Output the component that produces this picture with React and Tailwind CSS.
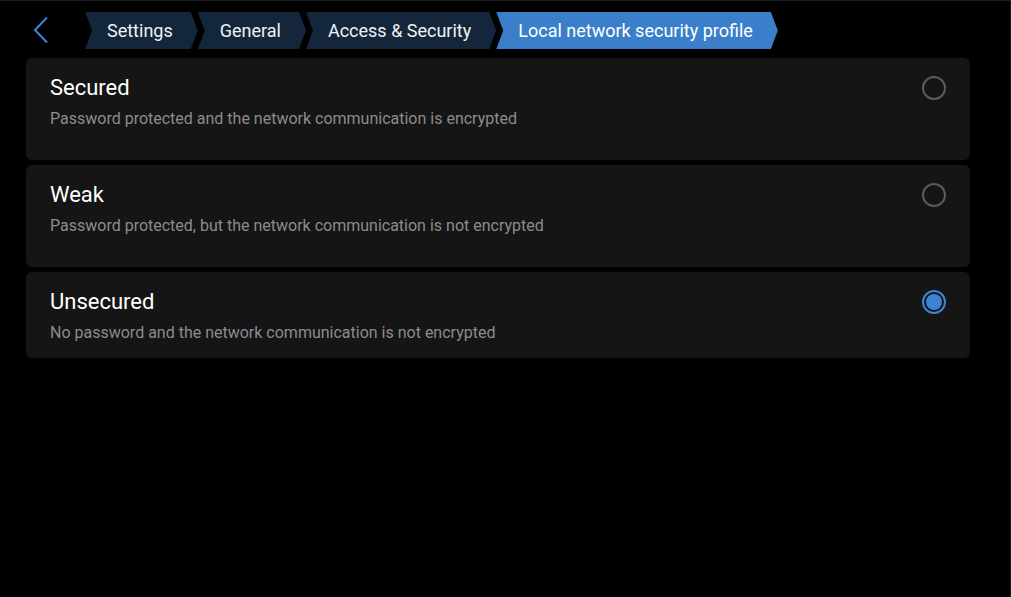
import React, { useState } from 'react';

const crumbs = [
  { label: "Settings", active: false },
  { label: "General", active: false },
  { label: "Access & Security", active: false },
  { label: "Local network security profile", active: true },
];

const profiles = [
  { id: "secured", title: "Secured", description: "Password protected and the network communication is encrypted", tall: true },
  { id: "weak", title: "Weak", description: "Password protected, but the network communication is not encrypted", tall: true },
  { id: "unsecured", title: "Unsecured", description: "No password and the network communication is not encrypted", tall: false },
];

const chevron = {
  clipPath: "polygon(0 0, calc(100% - 7px) 0, 100% 50%, calc(100% - 7px) 100%, 0 100%, 7px 50%)",
};

function Radio({ checked }) {
  if (checked) {
    return (
      <div className="w-6 h-6 rounded-full border-2 border-[#3d84d6] flex items-center justify-center">
        <div className="w-4 h-4 rounded-full bg-[#3d84d6]" />
      </div>
    );
  }
  return <div className="w-6 h-6 rounded-full border-2 border-[#5b5b5b]" />;
}

export default function App() {
  const [selected, setSelected] = useState("unsecured");

  return (
    <div
      className="w-full h-[597px] bg-black border-t border-r border-[#1d1d1d] overflow-hidden"
      style={{ fontFamily: "Roboto, 'Liberation Sans', sans-serif" }}
    >
      {/* Breadcrumb bar */}
      <div className="h-[57px] flex items-center">
        <button className="w-[85px] h-full flex items-center pl-[33px]">
          <svg width="16" height="28" viewBox="0 0 16 28" fill="none">
            <path d="M14 1.5 L2 14 L14 26.5" stroke="#3d84d6" strokeWidth="2" />
          </svg>
        </button>
        <div className="flex items-center mt-[2px]">
          {crumbs.map((c) => (
            <div
              key={c.label}
              style={chevron}
              className={`h-[37px] flex items-center pl-[22px] pr-[25px] text-[18px] leading-none whitespace-nowrap ${
                c.active ? "bg-[#3b7fca] text-white" : "bg-[#13263b] text-[#f2f2f2]"
              }`}
            >
              {c.label}
            </div>
          ))}
        </div>
      </div>

      {/* Options */}
      <div className="w-[944px] ml-[26px] flex flex-col gap-[5px]">
        {profiles.map((p) => (
          <div
            key={p.id}
            onClick={() => setSelected(p.id)}
            className={`bg-[#151515] rounded-md flex items-start justify-between pl-6 pr-6 pt-[17px] ${
              p.tall ? "h-[102px]" : "h-[86px]"
            }`}
          >
            <div>
              <div className="text-[22px] leading-[26px] text-white">{p.title}</div>
              <div className="mt-[6px] text-[16px] leading-6 text-[#8c8c8c]">{p.description}</div>
            </div>
            <div className="mt-px">
              <Radio checked={selected === p.id} />
            </div>
          </div>
        ))}
      </div>
    </div>
  );
}
